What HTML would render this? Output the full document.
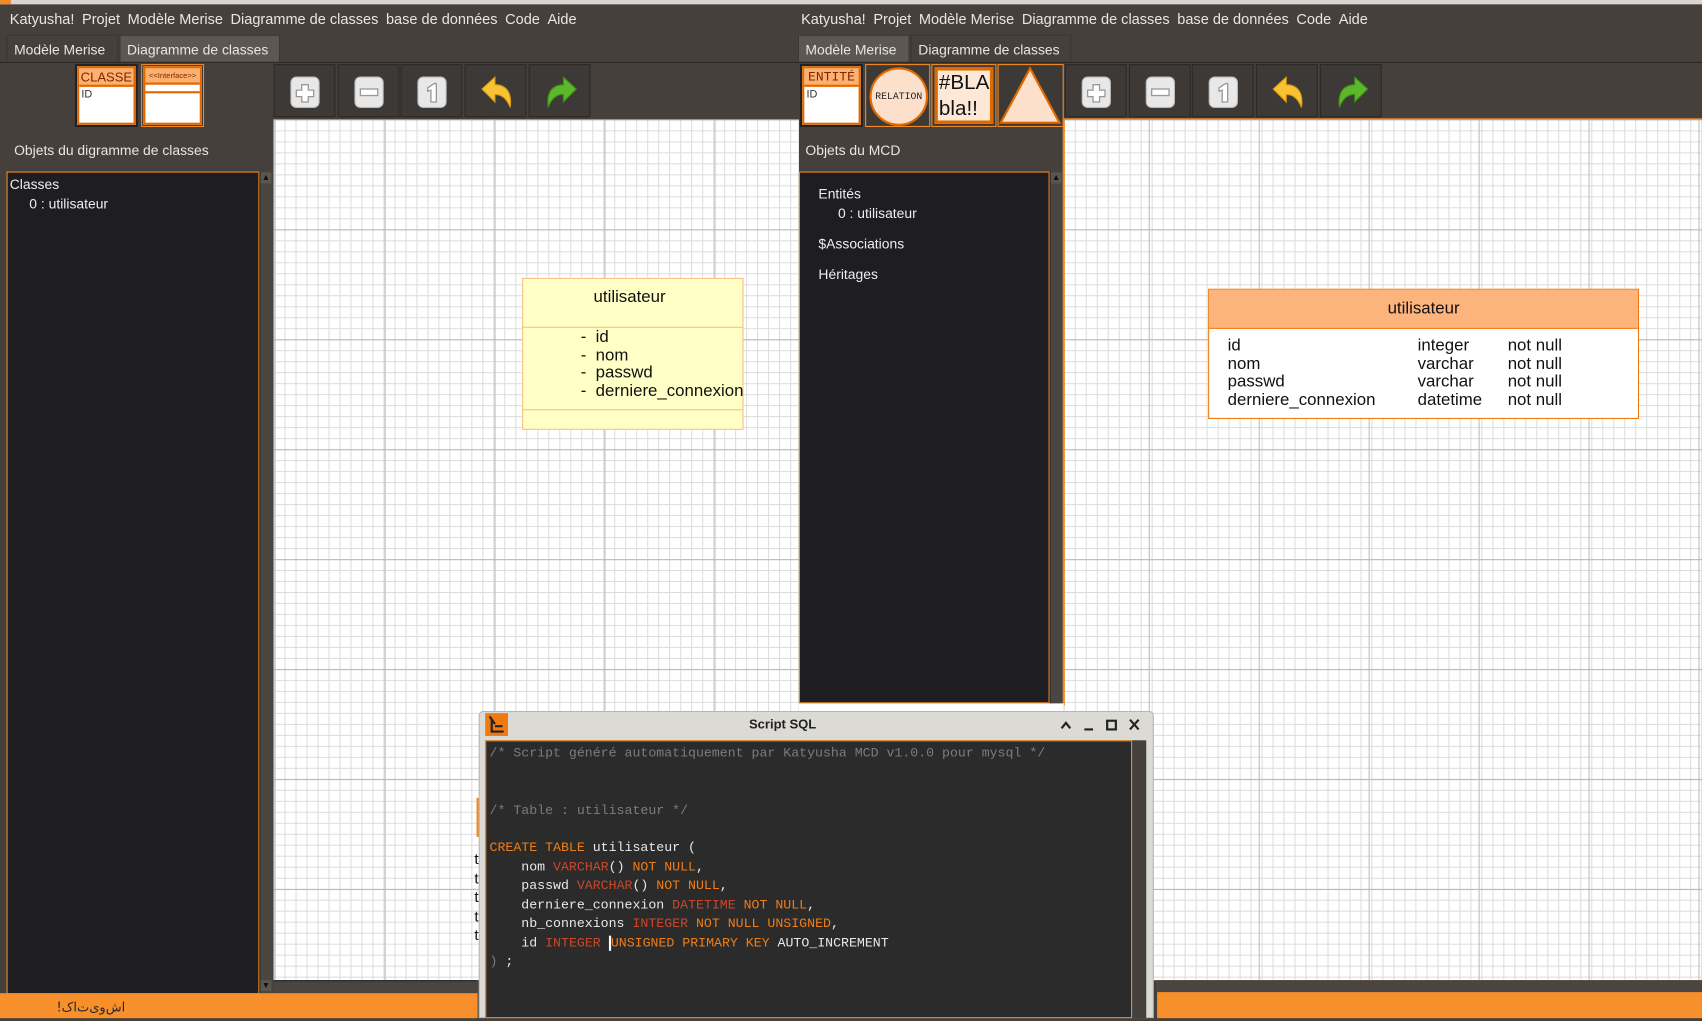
<!DOCTYPE html>
<html><head><meta charset="utf-8"><style>
*{box-sizing:border-box;margin:0;padding:0}
body{width:1702px;height:1018px;overflow:hidden;background:#45403c;font-family:"Liberation Sans","DejaVu Sans",sans-serif}
#w{position:absolute;left:0;top:0;width:1568px;height:938px;transform:scale(1.08546);transform-origin:0 0;background:#45403c;color:#e8e6e3;font-size:12.5px}
.a{position:absolute}
.menu span{margin-right:7px}
.tab{position:absolute;height:26px;line-height:26px;padding:0 6px;font-size:12.8px;background:#45403c;border:1px solid #3a3633}
.tab.on{background:#5c5752}
.grid{position:absolute;background-color:#fff;
background-image:linear-gradient(#b8b8b8 1px,transparent 1px),linear-gradient(90deg,#b8b8b8 1px,transparent 1px),linear-gradient(#dcdcdc 1px,transparent 1px),linear-gradient(90deg,#dcdcdc 1px,transparent 1px);
background-size:101.3px 101.3px,101.3px 101.3px,10.13px 10.13px,10.13px 10.13px}
.btn{position:absolute;top:59px;width:57px;height:49px;background:#3d3936;border:1px solid #2c2926}
.btn svg{position:absolute;left:13px;top:9px}
.tree{position:absolute;background:#1e1d22;border:1px solid #f08a24;color:#eee;font-size:12.8px}
.sb{position:absolute;background:#4a4541;border-left:1px solid #2a2826}
.code{font-family:"Liberation Mono","DejaVu Sans Mono",monospace;font-size:12.2px;white-space:pre;color:#e8e8e8}
.c{color:#7c7c7c}.k{color:#ef7d18}.t{color:#c8472a}
</style></head><body><div id="w">
<div class="a" style="left:0;top:0;width:1568px;height:4px;background:#d8d5d1"></div>
<div class="a" style="left:0;top:0;width:10px;height:4px;background:#f08a24"></div>
<div class="a menu" style="left:9px;top:10px;font-size:13.4px"><span>Katyusha!</span><span>Projet</span><span>Modèle Merise</span><span>Diagramme de classes</span><span>base de données</span><span>Code</span><span>Aide</span></div>
<div class="a menu" style="left:738px;top:10px;font-size:13.4px"><span>Katyusha!</span><span>Projet</span><span>Modèle Merise</span><span>Diagramme de classes</span><span>base de données</span><span>Code</span><span>Aide</span></div>
<div class="tab" style="left:6px;top:32px;width:103px">Modèle Merise</div>
<div class="tab on" style="left:110px;top:32px;width:148px">Diagramme de classes</div>
<div class="tab on" style="left:735px;top:32px;width:103px">Modèle Merise</div>
<div class="tab" style="left:839px;top:32px;width:148px">Diagramme de classes</div>
<div class="a" style="left:0;top:57px;width:1568px;height:1px;background:#2c2926"></div>

<div class="a" style="left:69px;top:59px;width:58px;height:58px;background:#222;padding:2px"><div style="border:2px solid #e06a00;height:54px;background:#fff"><div style="background:#fdb070;color:#7a2800;font-size:12px;height:17px;line-height:17px;border-bottom:2px solid #e06a00;text-align:center">CLASSE</div><div style="color:#333;font-size:10px;padding:2px">ID</div></div></div>
<div class="a" style="left:130px;top:59px;width:58px;height:58px;border:1px solid #f08a24;padding:1px;background:#3d3936"><div style="border:2px solid #e06a00;height:54px;background:#fff"><div style="background:#fdb070;color:#7a2800;font-size:7px;height:15px;line-height:15px;border-bottom:2px solid #e06a00;text-align:center">&lt;&lt;Interface&gt;&gt;</div><div style="height:8px;border-bottom:2px solid #e06a00"></div></div></div>

<div class="a" style="left:737px;top:59px;width:58px;height:58px;background:#222;padding:2px"><div style="border:2px solid #e06a00;height:54px;background:#fff"><div style="background:#fdb070;color:#7a2800;font-size:12px;height:17px;line-height:17px;border-bottom:2px solid #e06a00;text-align:center;font-family:'Liberation Mono',monospace">ENTITÉ</div><div style="color:#333;font-size:10px;padding:2px">ID</div></div></div>
<div class="a" style="left:797px;top:59px;width:60px;height:58px;border:1px solid #f08a24;background:#3d3936"><div style="position:absolute;left:3px;top:2px;width:54px;height:54px;border-radius:50%;background:#fde0cc;border:2px solid #e06a00;color:#222;font-size:9px;line-height:50px;text-align:center;font-family:'Liberation Mono',monospace">RELATION</div></div>
<div class="a" style="left:858px;top:59px;width:60px;height:58px;border:1px solid #f08a24;background:#3d3936;padding:2px"><div style="border:3px solid #e06a00;height:52px;background:#fde8d8;color:#111;font-size:19px;line-height:24px;padding-left:1px">#BLA<br>bla!!</div></div>
<div class="a" style="left:919px;top:59px;width:61px;height:58px;border:1px solid #f08a24;background:#3d3936"><svg width="59" height="56"><polygon points="29,3 56,53 2,53" fill="#fde0cc" stroke="#e06a00" stroke-width="2"/></svg></div>

<div id="tb"></div>

<div class="a" style="left:13px;top:131px;font-size:12.8px">Objets du digramme de classes</div>
<div class="tree" style="left:6px;top:158px;width:233px;height:758px"><div style="padding:3px 2px">Classes</div><div style="padding:0 20px">0 : utilisateur</div></div>
<div class="sb" style="left:239px;top:158px;width:12px;height:757px"></div>
<div class="a" style="left:240px;top:159px;width:10px;height:10px;color:#111;font-size:8px;background:#5a5550;text-align:center">▲</div>
<div class="a" style="left:240px;top:903px;width:10px;height:10px;color:#111;font-size:8px;background:#5a5550;text-align:center">▼</div>

<div class="grid" style="left:252px;top:110px;width:484px;height:793px;background-position:-1px 0,1px 0,0 0,0 0"></div>
<div class="a" style="left:252px;top:903px;width:188px;height:12px;background:#4a4541;border-top:1px solid #2a2826"></div>
<div class="a" style="left:481px;top:256px;width:204px;height:140px;background:#ffffc6;border:1px solid #f8c080"></div>
<div class="a" style="left:481px;top:301px;width:204px;height:1px;background:#f8c080"></div>
<div class="a" style="left:481px;top:377px;width:204px;height:1px;background:#f8c080"></div>
<div class="a" style="left:481px;top:265px;width:198px;text-align:center;color:#111;font-size:15.5px">utilisateur</div>
<div class="a" style="left:535px;top:303px;color:#111;font-size:15.5px;line-height:16.6px;white-space:pre">-  id
-  nom
-  passwd
-  derniere_connexion</div>

<div class="a" style="left:742px;top:131px;font-size:12.8px">Objets du MCD</div>
<div class="tree" style="left:736px;top:158px;width:231px;height:490px"><div style="position:absolute;left:17px;top:12px">Entités</div><div style="position:absolute;left:35px;top:30px">0 : utilisateur</div><div style="position:absolute;left:17px;top:58px">$Associations</div><div style="position:absolute;left:17px;top:86px">Héritages</div></div>
<div class="sb" style="left:967px;top:158px;width:12px;height:490px"></div>
<div class="a" style="left:968px;top:159px;width:10px;height:10px;color:#111;font-size:8px;background:#5a5550;text-align:center">▲</div>

<div class="grid" style="left:980px;top:110px;width:588px;height:793px;background-position:-23px 0,-23px 0,0 0,0 0"></div>
<div class="a" style="left:980px;top:109px;width:588px;height:1px;background:#f08a24"></div>
<div class="a" style="left:979px;top:110px;width:1.5px;height:540px;background:#f08a24"></div>
<div class="a" style="left:736px;top:648px;width:244px;height:8px;background:#fff"></div>
<div class="a" style="left:1113px;top:266px;width:397px;height:120px;background:#fff;border:1px solid #f07a10"></div>
<div class="a" style="left:1114px;top:267px;width:395px;height:36px;background:#fdb47c;border-bottom:1px solid #f07a10;text-align:center;line-height:36px;color:#111;font-size:15.5px">utilisateur</div>
<div class="a" style="left:1131px;top:311px;color:#111;font-size:15.5px;line-height:16.6px;white-space:pre">id
nom
passwd
derniere_connexion</div>
<div class="a" style="left:1306px;top:311px;color:#111;font-size:15.5px;line-height:16.6px;white-space:pre">integer
varchar
varchar
datetime</div>
<div class="a" style="left:1389px;top:311px;color:#111;font-size:15.5px;line-height:16.6px;white-space:pre">not null
not null
not null
not null</div>
<div class="a" style="left:1066px;top:903px;width:502px;height:35px;background:#f7902a"></div>
<div class="a" style="left:1066px;top:903px;width:502px;height:11px;background:#4a4541"></div>

<div class="a" style="left:0;top:915px;width:440px;height:23px;background:#f7902a;color:#2a2a2a;font-size:12px;line-height:26px;padding-left:52px;font-family:'DejaVu Sans',sans-serif"><span>!</span><span>اش‌وی‌ت‌اک</span></div>
<div class="a" style="left:439px;top:735px;width:4px;height:36px;background:#f08a24"></div>
<div class="a" style="left:437px;top:783px;color:#111;font-size:14px;line-height:17.5px;white-space:pre">t
t
t
t
t</div>

<div class="a" style="left:441px;top:655px;width:622px;height:283px;background:#dcdad5;border:1px solid #b8b4b0;border-radius:4px 4px 0 0"></div>
<div class="a" style="left:447px;top:657px;width:21px;height:21px;background:#f07a10"><svg width="21" height="21"><path d="M4 3 L9 10 M6 6 V17 H17 M9 12 H16" stroke="#222" stroke-width="2" fill="none"/></svg></div>
<div class="a" style="left:441px;top:660px;width:560px;text-align:center;color:#222;font-size:12px;font-weight:bold">Script SQL</div>
<svg class="a" style="left:974px;top:660px" width="80" height="16"><path d="M4 11 L8 6 L12 11" stroke="#222" stroke-width="2" fill="none"/><path d="M25 12 H33" stroke="#222" stroke-width="2"/><rect x="46" y="4" width="8" height="8" stroke="#222" stroke-width="2" fill="none"/><path d="M67 3 L75 12 M75 3 L67 12" stroke="#222" stroke-width="2"/></svg>
<div class="a" style="left:447px;top:682px;width:596px;height:256px;background:#2b2b2b;border:1px solid #f08a24"></div>
<div class="a" style="left:1043px;top:682px;width:13px;height:256px;background:#45403c"></div>
<div class="a code" style="left:451px;top:686px;line-height:17.5px"><span class="c">/* Script généré automatiquement par Katyusha MCD v1.0.0 pour mysql */</span>


<span class="c">/* Table : utilisateur */</span>
</div>
<div class="a code" style="left:451px;top:773px;line-height:17.5px"><span class="k">CREATE TABLE</span> utilisateur (
    nom <span class="t">VARCHAR</span>() <span class="k">NOT NULL</span>,
    passwd <span class="t">VARCHAR</span>() <span class="k">NOT NULL</span>,
    derniere_connexion <span class="t">DATETIME</span> <span class="k">NOT NULL</span>,
    nb_connexions <span class="t">INTEGER</span> <span class="k">NOT NULL UNSIGNED</span>,
    id <span class="t">INTEGER</span> <span class="k" style="border-left:2px solid #fff">UNSIGNED PRIMARY KEY</span> AUTO_INCREMENT
<span class="c">) </span>;</div>
</div>
<script>
var s='';
function icons(i){
 if(i<3){var g=i==0?'<path d="M12 9h6v5h5v6h-5v5h-6v-5H7v-6h5z" fill="#fff" stroke="#999" stroke-width="1.2"/>':i==1?'<rect x="7" y="13" width="16" height="6" fill="#fff" stroke="#999" stroke-width="1.2"/>':'<path d="M11 12l6-4h2v17h-5V14l-3 1z" fill="#fff" stroke="#999" stroke-width="1.2"/>';
  return '<svg width="30" height="32"><rect x="2" y="2" width="26" height="28" rx="5" fill="#e8e8e8" stroke="#bbb"/>'+g+'</svg>';}
 if(i==3)return '<svg width="32" height="32"><path d="M2 13 L14 2 V9 C24 9 30 16 28 30 C25 22 20 18 14 18 V25 Z" fill="#f7c233" stroke="#d89a10"/></svg>';
 return '<svg width="32" height="32"><path d="M30 13 L18 2 V9 C8 9 2 16 4 30 C7 22 12 18 18 18 V25 Z" fill="#5cb82a" stroke="#3a8a18"/></svg>';
}
[[252,1],[980,0]].forEach(function(p){for(var i=0;i<5;i++){var x=p[0]+i*58.7+(p[1]?0:1);s+='<div class="btn" style="left:'+x+'px">'+icons(i)+'</div>';}});
document.getElementById('tb').innerHTML=s;
</script>
</body></html>
